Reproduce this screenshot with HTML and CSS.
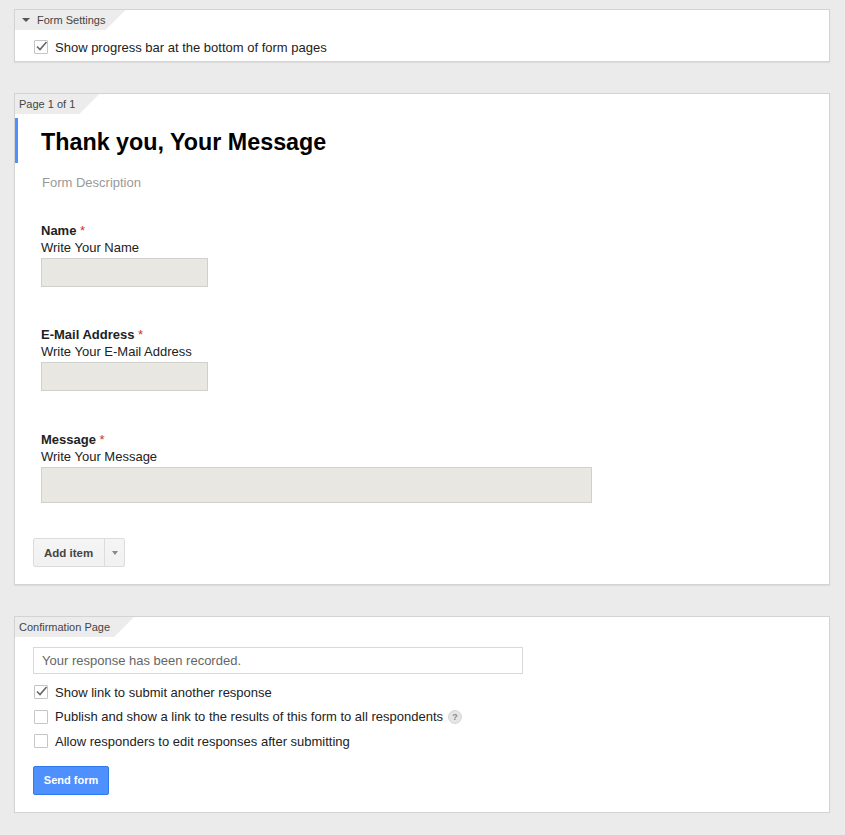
FILE: index.html
```html
<!DOCTYPE html>
<html>
<head>
<meta charset="utf-8">
<link rel="stylesheet" href="styles.css">
</head>
<body>
<div class="page">
  <section class="card card-settings">
    <div class="tab tab-settings"><span class="tri"></span>Form Settings</div>
    <label class="check-row">
      <span class="cb checked"><svg viewBox="0 0 15 15" width="15" height="15"><path d="M3 7.5 L6 10.5 L12.5 3" fill="none" stroke="#666" stroke-width="1.6"/></svg></span>
      <span>Show progress bar at the bottom of form pages</span>
    </label>
  </section>

  <section class="card card-page">
    <div class="tab">Page 1 of 1</div>
    <div class="header">
      <h1 class="title">Thank you, Your Message</h1>
    </div>
    <div class="desc">Form Description</div>
    <div class="items">
      <div class="item">
        <div class="q">Name <span class="req">*</span></div>
        <div class="help">Write Your Name</div>
        <div class="field short"></div>
      </div>
      <div class="item">
        <div class="q">E-Mail Address <span class="req">*</span></div>
        <div class="help">Write Your E-Mail Address</div>
        <div class="field short"></div>
      </div>
      <div class="item item-msg">
        <div class="q">Message <span class="req">*</span></div>
        <div class="help">Write Your Message</div>
        <div class="field long"></div>
      </div>
    </div>
    <div class="add-btn">
      <span class="add-main">Add item</span>
      <span class="add-drop"><span class="tri small"></span></span>
    </div>
  </section>

  <section class="card card-confirm">
    <div class="tab">Confirmation Page</div>
    <div class="confirm-body">
      <div class="text-input">Your response has been recorded.</div>
      <label class="check-row">
        <span class="cb checked"><svg viewBox="0 0 15 15" width="15" height="15"><path d="M3 7.5 L6 10.5 L12.5 3" fill="none" stroke="#666" stroke-width="1.6"/></svg></span>
        <span>Show link to submit another response</span>
      </label>
      <label class="check-row">
        <span class="cb"></span>
        <span>Publish and show a link to the results of this form to all respondents</span>
        <span class="help-icon">?</span>
      </label>
      <label class="check-row">
        <span class="cb"></span>
        <span>Allow responders to edit responses after submitting</span>
      </label>
      <div class="send-btn">Send form</div>
    </div>
  </section>
</div>
</body>
</html>
```

FILE: styles.css
```css
* { box-sizing: border-box; }
html, body { margin: 0; padding: 0; }
body {
  background: #ebebeb;
  font-family: "Liberation Sans", Arial, sans-serif;
  color: #222;
  font-size: 13px;
}
.page {
  padding: 9px 15px 0 14px;
  display: flex;
  flex-direction: column;
  gap: 31px;
  width: 845px;
}
.card {
  background: #fff;
  border: 1px solid #d3d3d3;
  box-shadow: 0 1px 1px rgba(0,0,0,0.06);
  display: flex;
  flex-direction: column;
}
.tab {
  align-self: flex-start;
  height: 20px;
  line-height: 20px;
  font-size: 11px;
  color: #444;
  background: #ececec;
  padding: 0 24px 0 4px;
  clip-path: polygon(0 0, 100% 0, calc(100% - 20px) 100%, 0 100%);
  display: flex;
  align-items: center;
}
.tab-settings { padding-left: 6px; padding-right: 20px; }
.tri {
  width: 0; height: 0;
  border-left: 4px solid transparent;
  border-right: 4px solid transparent;
  border-top: 4px solid #555;
  margin-right: 7px;
  margin-left: 1px;
}
.tri.small { border-top-color: #888; border-left-width: 3.5px; border-right-width: 3.5px; margin: 0; }

.card-settings { height: 53px; }
.card-settings .check-row { margin-top: 5px; }

.check-row {
  display: flex;
  align-items: center;
  height: 24px;
  padding-left: 19px;
  font-size: 13px;
  color: #222;
}
.cb {
  width: 14px; height: 14px;
  border: 1px solid #c6c6c6;
  background: #fff;
  margin-right: 7px;
  position: relative;
  flex: none;
  border-radius: 1px;
}
.cb svg { position: absolute; left: -1px; top: -2px; }

.header {
  margin-top: 4px;
  border-left: 3px solid #4d90fe;
  padding-left: 23px;
  height: 45px;
}
.title {
  margin: 0;
  padding-top: 12px;
  font-size: 23.3px;
  font-weight: bold;
  color: #000;
  line-height: 24px;
}
.desc {
  margin-top: 11px;
  padding-left: 27px;
  color: #999;
  font-size: 13px;
  line-height: 18px;
}

.items {
  padding-left: 26px;
  margin-top: 30px;
  display: flex;
  flex-direction: column;
  gap: 39px;
}
.item-msg { margin-top: 1px; }
.item { display: flex; flex-direction: column; }
.q { font-weight: bold; font-size: 13px; line-height: 17px; color: #222; }
.req { color: #c53929; font-weight: normal; }
.help { font-size: 13px; line-height: 17px; color: #222; margin-bottom: 2px; }
.field {
  background: #e8e7e2;
  border: 1px solid #d0d0cc;
}
.field.short { width: 167px; height: 29px; }
.field.long { width: 551px; height: 36px; }

.add-btn {
  margin: 35px 0 17px 18px;
  display: flex;
  align-self: flex-start;
  height: 29px;
  border: 1px solid #dcdcdc;
  border-radius: 2px;
  background: linear-gradient(#f5f5f5, #f1f1f1);
  font-size: 11.5px;
  font-weight: bold;
  color: #444;
}
.add-main {
  display: flex; align-items: center;
  padding: 0 10px;
  width: 71px;
  border-right: 1px solid #dcdcdc;
}
.add-drop {
  width: 19px;
  display: flex; align-items: center; justify-content: center;
}

.confirm-body {
  padding: 10px 0 17px 18px;
  display: flex;
  flex-direction: column;
}
.text-input {
  width: 490px;
  height: 27px;
  border: 1px solid #d9d9d9;
  color: #666;
  padding-left: 8px;
  line-height: 25px;
  font-size: 13px;
  margin-bottom: 6px;
}
.confirm-body .check-row { padding-left: 1px; height: 24.5px; }
.help-icon {
  width: 14px; height: 14px;
  border-radius: 50%;
  background: #e5e5e5;
  border: 1px solid #d6d6d6;
  color: #888;
  font-size: 9px;
  font-weight: bold;
  display: flex; align-items: center; justify-content: center;
  margin-left: 5px;
}
.send-btn {
  margin-top: 12px;
  align-self: flex-start;
  width: 76px;
  height: 29px;
  background: #4d90fe;
  border: 1px solid #3079ed;
  border-radius: 2px;
  color: #fff;
  font-weight: bold;
  font-size: 11px;
  display: flex; align-items: center; justify-content: center;
}
```
